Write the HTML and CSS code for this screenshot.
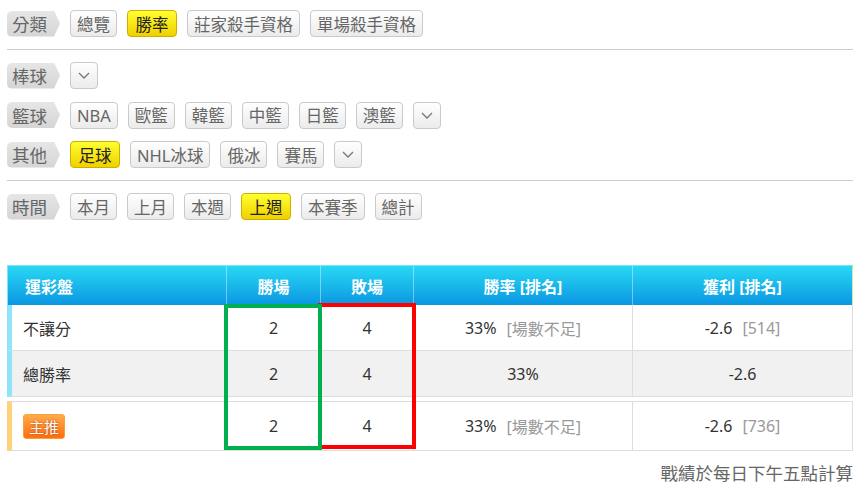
FILE: index.html
```html
<!DOCTYPE html>
<html lang="zh-Hant">
<head>
<meta charset="utf-8">
<title>勝率</title>
<link rel="stylesheet" href="styles.css">
</head>
<body>
<div class="page">
  <div class="frow">
    <span class="tag">分類</span>
    <div class="btns">
      <span class="btn">總覽</span>
      <span class="btn on">勝率</span>
      <span class="btn">莊家殺手資格</span>
      <span class="btn">單場殺手資格</span>
    </div>
  </div>
  <hr class="divider">
  <div class="group">
    <div class="frow">
      <span class="tag">棒球</span>
      <div class="btns">
        <span class="btn dd"><svg width="12" height="7" viewBox="0 0 12 7"><polyline points="1,1 6,6 11,1" fill="none" stroke="#777" stroke-width="1.3"/></svg></span>
      </div>
    </div>
    <div class="frow">
      <span class="tag">籃球</span>
      <div class="btns">
        <span class="btn">NBA</span>
        <span class="btn">歐籃</span>
        <span class="btn">韓籃</span>
        <span class="btn">中籃</span>
        <span class="btn">日籃</span>
        <span class="btn">澳籃</span>
        <span class="btn dd"><svg width="12" height="7" viewBox="0 0 12 7"><polyline points="1,1 6,6 11,1" fill="none" stroke="#777" stroke-width="1.3"/></svg></span>
      </div>
    </div>
    <div class="frow">
      <span class="tag">其他</span>
      <div class="btns">
        <span class="btn on">足球</span>
        <span class="btn">NHL冰球</span>
        <span class="btn">俄冰</span>
        <span class="btn">賽馬</span>
        <span class="btn dd"><svg width="12" height="7" viewBox="0 0 12 7"><polyline points="1,1 6,6 11,1" fill="none" stroke="#777" stroke-width="1.3"/></svg></span>
      </div>
    </div>
  </div>
  <hr class="divider">
  <div class="frow">
    <span class="tag">時間</span>
    <div class="btns">
      <span class="btn">本月</span>
      <span class="btn">上月</span>
      <span class="btn">本週</span>
      <span class="btn on">上週</span>
      <span class="btn">本賽季</span>
      <span class="btn">總計</span>
    </div>
  </div>

  <div class="tbl">
    <div class="thead">
      <div>運彩盤</div>
      <div>勝場</div>
      <div>敗場</div>
      <div>勝率 [排名]</div>
      <div>獲利 [排名]</div>
    </div>
    <div class="trow">
      <div>不讓分</div>
      <div>2</div>
      <div>4</div>
      <div>33%<span class="muted">[場數不足]</span></div>
      <div>-2.6<span class="muted">[514]</span></div>
    </div>
    <div class="trow alt">
      <div>總勝率</div>
      <div>2</div>
      <div>4</div>
      <div>33%</div>
      <div>-2.6</div>
    </div>
    <div class="trow hot">
      <div><span class="badge">主推</span></div>
      <div>2</div>
      <div>4</div>
      <div>33%<span class="muted">[場數不足]</span></div>
      <div>-2.6<span class="muted">[736]</span></div>
    </div>
    <div class="mark red"></div>
    <div class="mark green"></div>
  </div>
  <p class="note">戰績於每日下午五點計算</p>
</div>
</body>
</html>
```

FILE: styles.css
```css
body {
  margin: 0;
  background: #fff;
  font-family: "Noto Sans", "Noto Sans CJK TC", sans-serif;
}

.page {
  width: 846px;
  margin-left: 7px;
  padding-top: 10px;
}

.frow {
  display: flex;
  align-items: center;
  gap: 10px;
  height: 27px;
}

.tag {
  box-sizing: border-box;
  width: 53px;
  height: 26px;
  padding-left: 5px;
  display: flex;
  align-items: center;
  font-size: 17.5px;
  color: #666;
  background: linear-gradient(#e6e6e6, #d5d5d5);
  border-radius: 5px 0 0 5px;
  clip-path: polygon(0 0, 47px 0, 100% 50%, 47px 100%, 0 100%);
}

.btns {
  display: flex;
  gap: 10px;
}

.btn {
  box-sizing: border-box;
  height: 27px;
  padding: 0 6px;
  border: 1px solid #cacaca;
  border-radius: 4px;
  background: linear-gradient(#ffffff, #ebebeb);
  color: #666;
  font-size: 16.5px;
  display: flex;
  align-items: center;
  white-space: nowrap;
}

.btn.on {
  padding: 0 7.5px;
  background: linear-gradient(#ffff30, #f0d000);
  border-color: #cfae00;
  color: #222;
}

.btn.dd {
  width: 28px;
  padding: 0;
  justify-content: center;
}

.divider {
  border: 0;
  border-top: 1px solid #cccccc;
  height: 0;
  margin: 12px 0;
}

.group {
  display: flex;
  flex-direction: column;
  gap: 12.5px;
}

.tbl {
  position: relative;
  margin-top: 45px;
  font-size: 16px;
  color: #333;
}

.thead {
  display: grid;
  grid-template-columns: 219px 94px 93px 219px 1fr;
  height: 40px;
  background: linear-gradient(#29d8f4, #0a97e2);
  color: #fff;
  font-weight: 700;
  border-top: 1px solid #7fe3f8;
  box-sizing: border-box;
}

.thead > div {
  display: flex;
  align-items: center;
  justify-content: center;
  border-left: 1px solid rgba(255, 255, 255, 0.4);
}

.thead > div:first-child {
  justify-content: flex-start;
  padding-left: 17px;
  border-left: 1px solid #7fe3f8;
}

.thead > div:last-child {
  border-right: 1px solid #c8eeb4;
}

.trow {
  display: grid;
  grid-template-columns: 214px 94px 93px 219px 1fr;
  height: 46px;
  box-sizing: border-box;
  border-left: 5px solid #8fe3fb;
  border-right: 1px solid #dddddd;
  border-bottom: 1px solid #dddddd;
  background: #fff;
}

.trow > div {
  display: flex;
  align-items: center;
  justify-content: center;
  border-left: 1px solid #dddddd;
}

.trow > div:first-child {
  justify-content: flex-start;
  padding-left: 11px;
  border-left: 0;
}

.trow.alt {
  background: #f1f1f1;
}

.trow.hot {
  margin-top: 4px;
  height: 50px;
  border-top: 1px solid #dddddd;
  border-left-color: #ffd27a;
}

.muted {
  color: #999;
  margin-left: 10px;
}

.badge {
  box-sizing: border-box;
  width: 42px;
  height: 25px;
  display: inline-flex;
  align-items: center;
  justify-content: center;
  font-size: 15px;
  color: #fff;
  background: linear-gradient(#ffac4a, #ff6c10);
  border: 1px solid #f9a236;
  border-radius: 3px;
  text-shadow: 0 0 2px #9a3a00;
}

.mark {
  position: absolute;
  box-sizing: border-box;
  width: 98px;
  height: 146px;
  border: 4px solid;
}

.mark.red {
  left: 311px;
  top: 38px;
  border-color: #ff0000;
}

.mark.green {
  left: 217px;
  top: 39px;
  border-color: #00b050;
}

.note {
  margin: 10px 0 0;
  text-align: right;
  font-size: 17.5px;
  line-height: 24px;
  color: #666;
}
```
